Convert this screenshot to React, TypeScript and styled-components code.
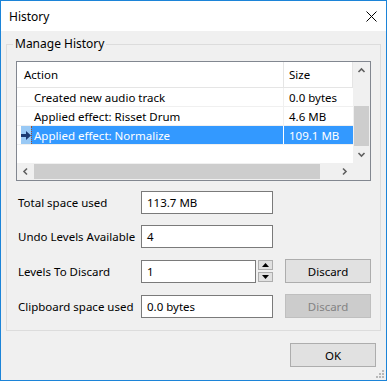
import React from 'react'
import styled, { createGlobalStyle } from 'styled-components'

const GlobalStyle = createGlobalStyle`
  html, body {
    margin: 0;
    padding: 0;
    background: #ffffff;
  }
  * {
    box-sizing: border-box;
  }
`

const Window = styled.div`
  width: 387px;
  height: 381px;
  border: 1px solid #1c84d8;
  background: #f0f0f0;
  display: flex;
  flex-direction: column;
  font-family: 'Segoe UI', 'Noto Sans', sans-serif;
  font-size: 11.5px;
  color: #000;
  position: relative;
`

const TitleBar = styled.div`
  height: 30px;
  background: #ffffff;
  display: flex;
  align-items: center;
  justify-content: space-between;
  padding: 0 9px 0 8px;
`

const Title = styled.span`
  font-size: 12px;
`

const Body = styled.div`
  flex: 1;
  display: flex;
  flex-direction: column;
  padding: 5px 5px 0 5px;
`

const Group = styled.fieldset`
  margin: 0;
  border: 1px solid #dcdcdc;
  padding: 9px 9px 12px 9px;
  min-width: 0;
`

const Legend = styled.legend`
  margin-left: -3px;
  padding: 0 2px;
  line-height: 16px;
  font-size: 12px;
`

const ListView = styled.div`
  height: 120px;
  border: 1px solid #828790;
  background: #fff;
  display: grid;
  grid-template-columns: 1fr 17px;
  grid-template-rows: 1fr 17px;
`

const ListContent = styled.div`
  overflow: hidden;
`

const HeaderRow = styled.div`
  display: grid;
  grid-template-columns: 267px 1fr;
  height: 26px;
  border-bottom: 1px solid #e5e5e5;
`

const HeaderCell = styled.div<{ $first?: boolean }>`
  display: flex;
  align-items: center;
  padding-left: ${p => (p.$first ? '7px' : '5px')};
  border-right: 1px solid #e5e5e5;
`

const Row = styled.div<{ $selected?: boolean }>`
  display: grid;
  grid-template-columns: 4px 10px 253px 1fr;
  height: 19px;
  border-bottom: 1px solid #f0f0f0;
  color: ${p => (p.$selected ? '#fff' : '#000')};
`

const StateCell = styled.div<{ $selected?: boolean }>`
  background: ${p => (p.$selected ? '#99c9f5' : 'transparent')};
  display: flex;
  align-items: center;
  justify-content: center;
`

const Cell = styled.div<{ $selected?: boolean; $focus?: boolean }>`
  display: flex;
  align-items: center;
  padding-left: ${p => (p.$focus ? '2px' : '3px')};
  background: ${p => (p.$selected ? '#3399ff' : 'transparent')};
  border-left: ${p => (p.$focus ? '1px dotted #a0522d' : 'none')};
  border-right: 1px solid ${p => (p.$selected ? '#ffffff' : '#f0f0f0')};
  white-space: nowrap;
`

const SizeCell = styled.div<{ $selected?: boolean }>`
  display: flex;
  align-items: center;
  padding-left: 5px;
  background: ${p => (p.$selected ? '#3399ff' : 'transparent')};
`

const VScroll = styled.div`
  background: #f0f0f0;
  display: flex;
  flex-direction: column;
`

const HScroll = styled.div`
  background: #f0f0f0;
  display: flex;
`

const Corner = styled.div`
  background: #f0f0f0;
`

const ArrowBtn = styled.div`
  width: 17px;
  height: 17px;
  display: flex;
  align-items: center;
  justify-content: center;
  flex: none;
`

const Track = styled.div<{ $vertical?: boolean }>`
  flex: 1;
  display: flex;
  flex-direction: ${p => (p.$vertical ? 'column' : 'row')};
  justify-content: ${p => (p.$vertical ? 'flex-end' : 'flex-start')};
`

const Thumb = styled.div<{ $vertical?: boolean }>`
  background: #cdcdcd;
  margin: ${p => (p.$vertical ? '0 1px' : '1px 0')};
`

const Form = styled.div`
  margin-top: 10px;
  display: grid;
  grid-template-columns: 125px 132px 1fr;
  row-gap: 11px;
  align-items: center;
`

const Label = styled.div`
  padding-left: 2px;
  white-space: nowrap;
`

const TextBox = styled.div<{ $w?: number }>`
  height: 23px;
  width: ${p => (p.$w ? `${p.$w}px` : 'auto')};
  border: 1px solid #7a7a7a;
  background: #fff;
  display: flex;
  align-items: center;
  padding-left: 5px;
`

const SpinWrap = styled.div`
  display: flex;
  gap: 2px;
`

const Spinner = styled.div`
  display: flex;
  flex-direction: column;
  gap: 2px;
  justify-content: center;
`

const SpinBtn = styled.div`
  width: 15px;
  height: 10px;
  border: 1px solid #adadad;
  background: #e1e1e1;
  display: flex;
  align-items: center;
  justify-content: center;
`

const Button = styled.div<{ $disabled?: boolean }>`
  height: 24px;
  width: 86px;
  justify-self: end;
  border: 1px solid ${p => (p.$disabled ? '#bfbfbf' : '#adadad')};
  background: ${p => (p.$disabled ? '#cccccc' : '#e1e1e1')};
  color: ${p => (p.$disabled ? '#838383' : '#000')};
  display: flex;
  align-items: center;
  justify-content: center;
`

const Footer = styled.div`
  display: flex;
  justify-content: flex-end;
  padding: 12px 5px 0 0;
`

const Grip = styled.svg`
  position: absolute;
  right: 2px;
  bottom: 2px;
`

const Chevron = ({ dir }: { dir: 'up' | 'down' | 'left' | 'right' }) => {
  const paths: Record<string, string> = {
    up: 'M1.5 6 L4.5 3 L7.5 6',
    down: 'M1.5 3 L4.5 6 L7.5 3',
    left: 'M6 1.5 L3 4.5 L6 7.5',
    right: 'M3 1.5 L6 4.5 L3 7.5',
  }
  return (
    <svg width="9" height="9" viewBox="0 0 9 9">
      <path d={paths[dir]} fill="none" stroke="#606060" strokeWidth="1.6" />
    </svg>
  )
}

const Tri = ({ up }: { up?: boolean }) => (
  <svg width="7" height="4" viewBox="0 0 7 4">
    <path d={up ? 'M0 4 L3.5 0 L7 4 Z' : 'M0 0 L3.5 4 L7 0 Z'} fill="#000" />
  </svg>
)

const rows = [
  { action: 'Created new audio track', size: '0.0 bytes' },
  { action: 'Applied effect: Risset Drum', size: '4.6 MB' },
  { action: 'Applied effect: Normalize', size: '109.1 MB', selected: true },
]

const App: React.FC = () => {
  return (
    <Window>
      <GlobalStyle />
      <TitleBar>
        <Title>History</Title>
        <svg width="11" height="11" viewBox="0 0 11 11">
          <path d="M0.5 0.5 L10.5 10.5 M10.5 0.5 L0.5 10.5" stroke="#000" strokeWidth="1" />
        </svg>
      </TitleBar>
      <Body>
        <Group>
          <Legend>Manage History</Legend>
          <ListView>
            <ListContent>
              <HeaderRow>
                <HeaderCell $first>Action</HeaderCell>
                <HeaderCell>Size</HeaderCell>
              </HeaderRow>
              {rows.map(r => (
                <Row key={r.action} $selected={r.selected}>
                  <div />
                  <StateCell $selected={r.selected}>
                    {r.selected && (
                      <svg width="10" height="9" viewBox="0 0 10 9">
                        <path d="M0 3 H5 V0 L10 4.5 L5 9 V6 H0 Z" fill="#1b3a72" />
                      </svg>
                    )}
                  </StateCell>
                  <Cell $selected={r.selected} $focus={r.selected}>{r.action}</Cell>
                  <SizeCell $selected={r.selected}>{r.size}</SizeCell>
                </Row>
              ))}
            </ListContent>
            <VScroll>
              <ArrowBtn><Chevron dir="up" /></ArrowBtn>
              <Track $vertical>
                <Thumb $vertical style={{ height: 40 }} />
              </Track>
              <ArrowBtn><Chevron dir="down" /></ArrowBtn>
            </VScroll>
            <HScroll>
              <ArrowBtn><Chevron dir="left" /></ArrowBtn>
              <Track>
                <Thumb style={{ width: 286 }} />
              </Track>
              <ArrowBtn><Chevron dir="right" /></ArrowBtn>
            </HScroll>
            <Corner />
          </ListView>
          <Form>
            <Label>Total space used</Label>
            <TextBox>113.7 MB</TextBox>
            <div />
            <Label>Undo Levels Available</Label>
            <TextBox>4</TextBox>
            <div />
            <Label>Levels To Discard</Label>
            <SpinWrap>
              <TextBox $w={115}>1</TextBox>
              <Spinner>
                <SpinBtn><Tri up /></SpinBtn>
                <SpinBtn><Tri /></SpinBtn>
              </Spinner>
            </SpinWrap>
            <Button>Discard</Button>
            <Label>Clipboard space used</Label>
            <TextBox>0.0 bytes</TextBox>
            <Button $disabled>Discard</Button>
          </Form>
        </Group>
        <Footer>
          <Button>OK</Button>
        </Footer>
      </Body>
      <Grip width="8" height="8" viewBox="0 0 8 8">
        <rect x="6" y="0" width="2" height="2" fill="#b8b8b8" />
        <rect x="3" y="3" width="2" height="2" fill="#b8b8b8" />
        <rect x="6" y="3" width="2" height="2" fill="#b8b8b8" />
        <rect x="0" y="6" width="2" height="2" fill="#b8b8b8" />
        <rect x="3" y="6" width="2" height="2" fill="#b8b8b8" />
        <rect x="6" y="6" width="2" height="2" fill="#b8b8b8" />
      </Grip>
    </Window>
  )
}

export default App
